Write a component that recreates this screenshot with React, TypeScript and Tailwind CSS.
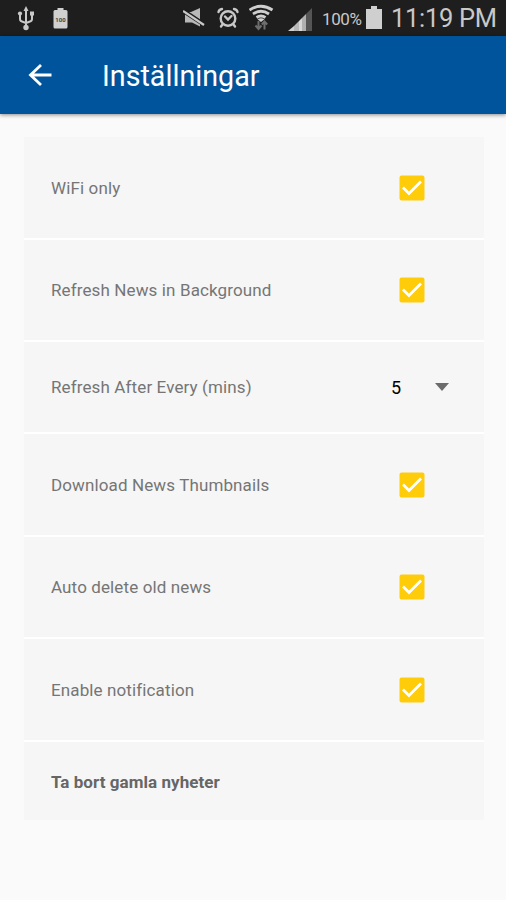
import clsx from "clsx";

type Setting = {
  label: string;
  height: string;
  control: "checkbox" | "select" | "none";
};

const settings: Setting[] = [
  { label: "WiFi only", height: "h-[101px]", control: "checkbox" },
  { label: "Refresh News in Background", height: "h-[100px]", control: "checkbox" },
  { label: "Refresh After Every (mins)", height: "h-[90px]", control: "select" },
  { label: "Download News Thumbnails", height: "h-[101px]", control: "checkbox" },
  { label: "Auto delete old news", height: "h-[100px]", control: "checkbox" },
  { label: "Enable notification", height: "h-[101px]", control: "checkbox" },
  { label: "Ta bort gamla nyheter", height: "h-[78px]", control: "none" },
];

function UsbIcon() {
  return (
    <svg width="18" height="26" viewBox="0 0 18 26" fill="none" stroke="#c8c8c8" strokeWidth="2">
      <path d="M9 4v18M3 9v5q0 2 2 2.500l4 1.500M15 9v5q0 2-2 2.500l-4 1.500" />
      <path d="M9 1l2.500 5h-5z" fill="#c8c8c8" stroke="none" />
      <circle cx="3" cy="8.500" r="2.100" fill="#c8c8c8" stroke="none" />
      <path d="M13 6.500h4v4h-4z" fill="#c8c8c8" stroke="none" />
      <circle cx="9" cy="22.500" r="2.700" fill="#c8c8c8" stroke="none" />
    </svg>
  );
}

function BatteryLevelIcon() {
  return (
    <svg width="15" height="21" viewBox="0 0 15 21">
      <path d="M4.500 0h6v2H13q1.500 0 1.500 1.500v15.500q0 1.500-1.500 1.500H2q-1.500 0-1.500-1.500V3.500Q.5 2 2 2h2.500z" fill="#d0d0d0" />
      <text x="7.500" y="13.500" textAnchor="middle" fontSize="6" fontWeight="700" fontFamily="Roboto, sans-serif" fill="#444">
        100
      </text>
    </svg>
  );
}

function MuteIcon() {
  return (
    <svg width="22" height="20" viewBox="0 0 22 20">
      <path d="M2 4h6l9-4v18.500L9 14.500H2z" fill="#b8b8b8" />
      <path d="M0 2.500l21 14" stroke="#1e1e1e" strokeWidth="4.500" />
      <path d="M0 3l21 14" stroke="#c8c8c8" strokeWidth="2.200" />
    </svg>
  );
}

function AlarmIcon() {
  return (
    <svg width="22" height="22" viewBox="0 0 22 22" fill="none" stroke="#c8c8c8" strokeWidth="2.400" strokeLinecap="round">
      <circle cx="11" cy="11.500" r="7.300" />
      <path d="M8 9.500l3 3 3.500-3.500M1.500 5q.5-2.500 3.500-3M20.500 5q-.5-2.500-3.500-3M5.500 17.500L4 19.500M16.500 17.500l1.500 2" />
    </svg>
  );
}

function WifiIcon() {
  return (
    <svg width="26" height="27" viewBox="0 0 26 27" fill="none" stroke="#cfcfcf" strokeWidth="2.800">
      <path d="M.5 6q11.500-7.500 23 0M4 10q8-5.500 16 0M7.500 13.500q4.500-3 9 0" />
      <path d="M12 18l-3.500-2.800q3.500-2 7 0z" fill="#cfcfcf" stroke="none" />
      <path d="M9.500 17v7.500M6.500 21.500l3 3.500 3-3.500M15.500 25.500v-8M12.800 20.500l2.700-3 2.700 3" stroke="#6e6e6e" strokeWidth="2" />
    </svg>
  );
}

function SignalIcon() {
  return (
    <svg width="25" height="24" viewBox="0 0 25 24">
      <path d="M0 23L6 18v5z" fill="#d2d2d2" />
      <path d="M6 18l5-5v10H6z" fill="#b8b8b8" />
      <path d="M11 13l3-3v13h-3z" fill="#d8d8d8" />
      <path d="M14 10l4-4v17h-4z" fill="#b0b0b0" />
      <path d="M18 6l6-6v23h-6z" fill="#555" />
    </svg>
  );
}

function StatusBar() {
  return (
    <div className="flex h-[36px] items-start bg-[#1e1e1e] text-[#c8c8c8]">
      <div className="ml-[17px] mt-[5px]">
        <UsbIcon />
      </div>
      <div className="ml-[18px] mt-[8px]">
        <BatteryLevelIcon />
      </div>
      <div className="ml-auto mt-[8px]">
        <MuteIcon />
      </div>
      <div className="ml-[12px] mt-[7px]">
        <AlarmIcon />
      </div>
      <div className="ml-[10px] mt-[4px]">
        <WifiIcon />
      </div>
      <div className="ml-[13px] mt-[8px]">
        <SignalIcon />
      </div>
      <span className="ml-[9px] mt-[8px] w-[42px] whitespace-nowrap text-[17px] leading-[22px] tracking-[-0.4px]">100%</span>
      <svg className="ml-[2px] mt-[6px]" width="17" height="23" viewBox="0 0 17 23">
        <path d="M5 0h6v3h5v20H0V3h5z" fill="#cfcfcf" />
      </svg>
      <span className="ml-[8px] mt-[3px] w-[115px] whitespace-nowrap text-[25.5px] leading-[30px] tracking-[-0.3px]">11:19 PM</span>
    </div>
  );
}

function Checkbox() {
  return (
    <svg width="26" height="26" viewBox="0 0 26 26">
      <rect x=".5" y=".5" width="25" height="25" rx="2" fill="#ffcc0a" />
      <path d="M4 12.500l6 6L22 6.500" fill="none" stroke="#fff" strokeWidth="2.700" />
    </svg>
  );
}

function SettingRow({ label, height, control }: Setting) {
  return (
    <div className={clsx("flex items-center bg-[#f6f6f6] pl-[27px]", height)}>
      <span
        className={clsx(
          "whitespace-nowrap text-[17px] leading-6",
          control === "none" ? "pt-px font-bold tracking-[0.05px] text-[#666]" : "tracking-[0.12px] text-[#757575]"
        )}
      >
        {label}
      </span>
      {control === "checkbox" && (
        <div className="ml-auto mr-[59px]">
          <Checkbox />
        </div>
      )}
      {control === "select" && (
        <div className="ml-auto mr-[35px] flex items-center">
          <span className="mr-[34px] pt-px text-[18px] leading-6 text-black">5</span>
          <svg width="14" height="8" viewBox="0 0 14 8">
            <path d="M0 0h14L7 8z" fill="#6b6b6b" />
          </svg>
        </div>
      )}
    </div>
  );
}

export default function App() {
  return (
    <div className="h-[900px] w-[506px] overflow-hidden bg-[#fafafa] font-[Roboto,sans-serif]">
      <StatusBar />
      <header className="flex h-[78px] items-center bg-[#00549b] shadow-[0_1px_4px_rgba(0,0,0,0.45)]">
        <svg className="ml-[28px]" width="24" height="24" viewBox="0 0 24 24" fill="none" stroke="#fff" strokeWidth="2.800">
          <path d="M23.500 12H2.500M13 2L2.500 12 13 22" />
        </svg>
        <h1 className="ml-[50px] pt-px text-[28.7px] leading-9 text-white">Inställningar</h1>
      </header>
      <main className="mx-6 mt-[23px]">
        <div className="flex w-[460px] flex-col gap-0.5 bg-white">
          {settings.map((s) => (
            <SettingRow key={s.label} {...s} />
          ))}
        </div>
      </main>
    </div>
  );
}
